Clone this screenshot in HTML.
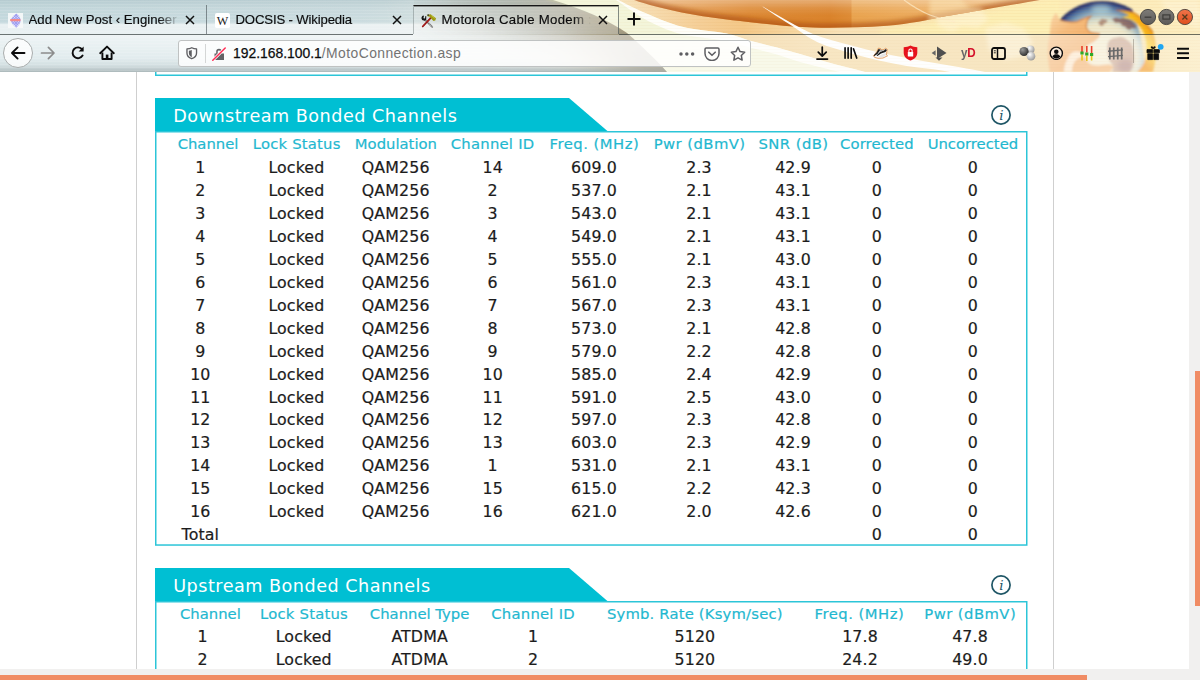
<!DOCTYPE html>
<html lang="en">
<head>
<meta charset="utf-8">
<title>Motorola Cable Modem : Status -> Connection</title>
<style>
html,body{margin:0;padding:0;}
body{width:1200px;height:680px;overflow:hidden;position:relative;background:#fff;font-family:"DejaVu Sans","Liberation Sans",sans-serif;}
#chrome{position:absolute;left:0;top:0;width:1200px;height:72px;overflow:hidden;background:#f3dcb4;}
#page{position:absolute;left:0;top:72px;width:1189px;height:597px;overflow:hidden;background:#fff;}
.vline{position:absolute;top:0;width:1px;height:597px;background:#cfcfcf;}
.topbox{position:absolute;left:155px;top:-10px;width:870.5px;height:13px;border:1.5px solid #2cc5d8;box-sizing:content-box;}
.banner{position:absolute;left:155px;width:460px;height:34px;}
.banner svg{position:absolute;left:0;top:0;}
.banner .title{position:absolute;left:18.2px;top:1px;line-height:34px;font-size:17.6px;letter-spacing:0.5px;color:#fff;white-space:nowrap;}
.info{position:absolute;left:990px;}
.box{position:absolute;left:155px;width:870.5px;border:1.5px solid #2cc5d8;border-bottom-width:1.5px;box-sizing:content-box;}
.row{position:absolute;left:0;width:1189px;height:22px;}
.row span{position:absolute;top:0;transform:translateX(-50%);white-space:nowrap;line-height:22px;}
.row.hd span{color:#1fb8d0;font-size:14.8px;-webkit-text-stroke:0.2px #1fb8d0;}
.row.dt span{color:#1c1c1c;font-size:15.8px;letter-spacing:0.12px;-webkit-text-stroke:0.2px #1c1c1c;}
#vscroll{position:absolute;left:1189px;top:72px;width:11px;height:608px;background:#f1f0ef;}
#vscroll i{position:absolute;left:6px;top:299px;width:5px;height:235px;background:#f08c64;}
#hscroll{position:absolute;left:0;top:669px;width:1200px;height:11px;background:#f1f0ef;}
#hscroll i{position:absolute;left:0;top:6px;width:1087px;height:5px;background:#f08c64;}

#navbar{position:absolute;left:0;top:34.5px;width:1200px;height:37.5px;background:rgba(255,255,255,.4);}
.nline{position:absolute;top:33.5px;height:1px;background:rgba(50,60,60,.7);}
#tabline{display:none}
.tab{position:absolute;top:5px;height:29px;font-family:"Liberation Sans",sans-serif;}
.tab.active{background:rgba(255,255,255,.22);border-top:1px solid #161616;box-shadow:inset 0 1px 0 rgba(22,22,22,.4);top:5px;border-left:1px solid rgba(90,100,100,.4);border-right:1px solid rgba(70,80,80,.65);box-sizing:content-box;width:204px !important;height:28px;}
.tab .fav{position:absolute;left:8px;top:8px;}
.tab.active .fav{top:7.5px;left:7px}
.tab .tl{-webkit-text-stroke:0.15px #0c0c0d;position:absolute;left:28.500px;top:7px;width:152px;overflow:hidden;white-space:nowrap;font-size:13.200px;line-height:16px;color:#0c0c0d;-webkit-mask-image:linear-gradient(to right,#000 85%,transparent 99%);mask-image:linear-gradient(to right,#000 85%,transparent 99%);}
.tab.active .tl{-webkit-mask-image:linear-gradient(to right,#000 88%,transparent 100%);mask-image:linear-gradient(to right,#000 88%,transparent 100%);letter-spacing:0.28px;}
.tab.active .tl{top:6px;left:27.500px}
.tab .tx{position:absolute;right:11px;top:10px;}
.tab.active .tx{top:9px;right:10px}
.tabsep{position:absolute;top:5px;width:1px;height:29px;background:rgba(70,80,85,.6);}
#newtab{position:absolute;left:627px;top:12px;}
#winctl{position:absolute;left:1138.500px;top:8px;}
#backbtn{position:absolute;left:3px;top:38px;width:30px;height:30px;border-radius:50%;background:rgba(255,255,255,.8);border:1px solid #a9adad;box-sizing:border-box;}
.ni{position:absolute;}
#urlbar{position:absolute;left:178px;top:40px;width:573px;height:26.500px;box-sizing:border-box;border:1px solid #bfc2c2;border-radius:3px;background:rgba(255,255,255,.82);font-family:"Liberation Sans",sans-serif;}
#urlbar svg{position:absolute;}
#urlbar .usep{position:absolute;left:26px;top:3px;width:1px;height:19px;background:#d4d6d6;}
#urlbar .url{position:absolute;left:54px;top:3px;font-size:13.900px;line-height:19px;color:#737373;white-space:nowrap;}
#urlbar .upath{letter-spacing:0.42px}
#urlbar .url b{font-weight:normal;color:#0c0c0d;-webkit-text-stroke:0.25px #0c0c0d;}
.ti{position:absolute;}
.ti{position:absolute;}
.yd{font-family:"Liberation Sans",sans-serif;font-weight:bold;font-size:12.5px;line-height:16px;color:#d4122c;letter-spacing:-0.3px;transform:scaleX(.93);transform-origin:0 0;}
.yd i{font-style:normal;color:#666;}
.tsep{position:absolute;top:39px;width:1px;height:24px;background:rgba(90,80,70,.35);}
.boxs{position:absolute;left:154px;}
</style>
</head>
<body>
<div id="page">
<div class="vline" style="left:136px"></div>
<div class="vline" style="left:1053px"></div>
<svg class="boxs" style="top:0" width="876" height="6"><path d="M1.75,-1 V3.25 H872.75 V-1" fill="none" stroke="#2cc5d8" stroke-width="1.5"/></svg>
<div class="banner" style="top:26px"><svg width="460" height="34" viewBox="0 0 460 34"><polygon points="0,0 414,0 453,33.5 0,33.5" fill="#00bfd3"/></svg><span class="title">Downstream Bonded Channels</span></div>
<svg class="info" style="top:32.0px" width="22" height="22" viewBox="0 0 22 22"><circle cx="11" cy="11" r="9.1" fill="none" stroke="#1f5666" stroke-width="1.7"/><text x="11.3" y="16" text-anchor="middle" font-family="DejaVu Serif, Liberation Serif, serif" font-style="italic" font-size="13.5" fill="#1f5666">i</text></svg>
<svg class="boxs" style="top:58px" width="876" height="417.28"><rect x="1.75" y="1.75" width="871" height="413.28" fill="none" stroke="#2cc5d8" stroke-width="1.5"/></svg>
<div class="row hd" style="top:61.20px"><span style="left:208.0px">Channel</span><span style="left:296.7px;letter-spacing:0.2px">Lock Status</span><span style="left:395.9px">Modulation</span><span style="left:492.6px;letter-spacing:0.25px">Channel ID</span><span style="left:594.4px;letter-spacing:0.5px">Freq. (MHz)</span><span style="left:699.6px;letter-spacing:0.44px">Pwr (dBmV)</span><span style="left:793.5px;letter-spacing:0.43px">SNR (dB)</span><span style="left:876.9px;letter-spacing:0.15px">Corrected</span><span style="left:972.9px">Uncorrected</span></div>
<div class="row dt" style="top:85.10px"><span style="left:200.3px">1</span><span style="left:296.4px">Locked</span><span style="left:395.7px">QAM256</span><span style="left:492.7px">14</span><span style="left:594.0px">609.0</span><span style="left:699.0px">2.3</span><span style="left:793.0px">42.9</span><span style="left:876.9px">0</span><span style="left:972.8px">0</span></div>
<div class="row dt" style="top:108.04px"><span style="left:200.3px">2</span><span style="left:296.4px">Locked</span><span style="left:395.7px">QAM256</span><span style="left:492.7px">2</span><span style="left:594.0px">537.0</span><span style="left:699.0px">2.1</span><span style="left:793.0px">43.1</span><span style="left:876.9px">0</span><span style="left:972.8px">0</span></div>
<div class="row dt" style="top:130.98px"><span style="left:200.3px">3</span><span style="left:296.4px">Locked</span><span style="left:395.7px">QAM256</span><span style="left:492.7px">3</span><span style="left:594.0px">543.0</span><span style="left:699.0px">2.1</span><span style="left:793.0px">43.1</span><span style="left:876.9px">0</span><span style="left:972.8px">0</span></div>
<div class="row dt" style="top:153.92px"><span style="left:200.3px">4</span><span style="left:296.4px">Locked</span><span style="left:395.7px">QAM256</span><span style="left:492.7px">4</span><span style="left:594.0px">549.0</span><span style="left:699.0px">2.1</span><span style="left:793.0px">43.1</span><span style="left:876.9px">0</span><span style="left:972.8px">0</span></div>
<div class="row dt" style="top:176.86px"><span style="left:200.3px">5</span><span style="left:296.4px">Locked</span><span style="left:395.7px">QAM256</span><span style="left:492.7px">5</span><span style="left:594.0px">555.0</span><span style="left:699.0px">2.1</span><span style="left:793.0px">43.0</span><span style="left:876.9px">0</span><span style="left:972.8px">0</span></div>
<div class="row dt" style="top:199.80px"><span style="left:200.3px">6</span><span style="left:296.4px">Locked</span><span style="left:395.7px">QAM256</span><span style="left:492.7px">6</span><span style="left:594.0px">561.0</span><span style="left:699.0px">2.3</span><span style="left:793.0px">43.1</span><span style="left:876.9px">0</span><span style="left:972.8px">0</span></div>
<div class="row dt" style="top:222.74px"><span style="left:200.3px">7</span><span style="left:296.4px">Locked</span><span style="left:395.7px">QAM256</span><span style="left:492.7px">7</span><span style="left:594.0px">567.0</span><span style="left:699.0px">2.3</span><span style="left:793.0px">43.1</span><span style="left:876.9px">0</span><span style="left:972.8px">0</span></div>
<div class="row dt" style="top:245.68px"><span style="left:200.3px">8</span><span style="left:296.4px">Locked</span><span style="left:395.7px">QAM256</span><span style="left:492.7px">8</span><span style="left:594.0px">573.0</span><span style="left:699.0px">2.1</span><span style="left:793.0px">42.8</span><span style="left:876.9px">0</span><span style="left:972.8px">0</span></div>
<div class="row dt" style="top:268.62px"><span style="left:200.3px">9</span><span style="left:296.4px">Locked</span><span style="left:395.7px">QAM256</span><span style="left:492.7px">9</span><span style="left:594.0px">579.0</span><span style="left:699.0px">2.2</span><span style="left:793.0px">42.8</span><span style="left:876.9px">0</span><span style="left:972.8px">0</span></div>
<div class="row dt" style="top:291.56px"><span style="left:200.3px">10</span><span style="left:296.4px">Locked</span><span style="left:395.7px">QAM256</span><span style="left:492.7px">10</span><span style="left:594.0px">585.0</span><span style="left:699.0px">2.4</span><span style="left:793.0px">42.9</span><span style="left:876.9px">0</span><span style="left:972.8px">0</span></div>
<div class="row dt" style="top:314.50px"><span style="left:200.3px">11</span><span style="left:296.4px">Locked</span><span style="left:395.7px">QAM256</span><span style="left:492.7px">11</span><span style="left:594.0px">591.0</span><span style="left:699.0px">2.5</span><span style="left:793.0px">43.0</span><span style="left:876.9px">0</span><span style="left:972.8px">0</span></div>
<div class="row dt" style="top:337.44px"><span style="left:200.3px">12</span><span style="left:296.4px">Locked</span><span style="left:395.7px">QAM256</span><span style="left:492.7px">12</span><span style="left:594.0px">597.0</span><span style="left:699.0px">2.3</span><span style="left:793.0px">42.8</span><span style="left:876.9px">0</span><span style="left:972.8px">0</span></div>
<div class="row dt" style="top:360.38px"><span style="left:200.3px">13</span><span style="left:296.4px">Locked</span><span style="left:395.7px">QAM256</span><span style="left:492.7px">13</span><span style="left:594.0px">603.0</span><span style="left:699.0px">2.3</span><span style="left:793.0px">42.9</span><span style="left:876.9px">0</span><span style="left:972.8px">0</span></div>
<div class="row dt" style="top:383.32px"><span style="left:200.3px">14</span><span style="left:296.4px">Locked</span><span style="left:395.7px">QAM256</span><span style="left:492.7px">1</span><span style="left:594.0px">531.0</span><span style="left:699.0px">2.1</span><span style="left:793.0px">43.1</span><span style="left:876.9px">0</span><span style="left:972.8px">0</span></div>
<div class="row dt" style="top:406.26px"><span style="left:200.3px">15</span><span style="left:296.4px">Locked</span><span style="left:395.7px">QAM256</span><span style="left:492.7px">15</span><span style="left:594.0px">615.0</span><span style="left:699.0px">2.2</span><span style="left:793.0px">42.3</span><span style="left:876.9px">0</span><span style="left:972.8px">0</span></div>
<div class="row dt" style="top:429.20px"><span style="left:200.3px">16</span><span style="left:296.4px">Locked</span><span style="left:395.7px">QAM256</span><span style="left:492.7px">16</span><span style="left:594.0px">621.0</span><span style="left:699.0px">2.0</span><span style="left:793.0px">42.6</span><span style="left:876.9px">0</span><span style="left:972.8px">0</span></div>
<div class="row dt" style="top:452.14px"><span style="left:200.3px">Total</span><span style="left:876.9px">0</span><span style="left:972.8px">0</span></div>
<div class="banner" style="top:496px"><svg width="460" height="34" viewBox="0 0 460 34"><polygon points="0,0 414,0 453,33.5 0,33.5" fill="#00bfd3"/></svg><span class="title">Upstream Bonded Channels</span></div>
<svg class="info" style="top:502.0px" width="22" height="22" viewBox="0 0 22 22"><circle cx="11" cy="11" r="9.1" fill="none" stroke="#1f5666" stroke-width="1.7"/><text x="11.3" y="16" text-anchor="middle" font-family="DejaVu Serif, Liberation Serif, serif" font-style="italic" font-size="13.5" fill="#1f5666">i</text></svg>
<svg class="boxs" style="top:528px" width="876" height="73.18"><rect x="1.75" y="1.75" width="871" height="69.18" fill="none" stroke="#2cc5d8" stroke-width="1.5"/></svg>
<div class="row hd" style="top:531.20px"><span style="left:210.4px">Channel</span><span style="left:304.0px;letter-spacing:0.2px">Lock Status</span><span style="left:419.6px;letter-spacing:0.0px">Channel Type</span><span style="left:533.1px;letter-spacing:0.25px">Channel ID</span><span style="left:694.8px;letter-spacing:0.18px">Symb. Rate (Ksym/sec)</span><span style="left:859.4px;letter-spacing:0.5px">Freq. (MHz)</span><span style="left:970.2px;letter-spacing:0.44px">Pwr (dBmV)</span></div>
<div class="row dt" style="top:554.40px"><span style="left:202.5px">1</span><span style="left:303.7px">Locked</span><span style="left:419.6px">ATDMA</span><span style="left:533.0px">1</span><span style="left:694.9px">5120</span><span style="left:860.0px">17.8</span><span style="left:970.0px">47.8</span></div>
<div class="row dt" style="top:577.34px"><span style="left:202.5px">2</span><span style="left:303.7px">Locked</span><span style="left:419.6px">ATDMA</span><span style="left:533.0px">2</span><span style="left:694.9px">5120</span><span style="left:860.0px">24.2</span><span style="left:970.0px">49.0</span></div>

</div>
<div id="hscroll"><i></i></div>
<div id="vscroll"><i></i></div>
<div id="chrome">
<svg id="themebg" width="1200" height="72" viewBox="0 0 1200 72" style="position:absolute;left:0;top:0">
<defs>
<linearGradient id="gBase" x1="0" y1="0" x2="1200" y2="0" gradientUnits="userSpaceOnUse">
<stop offset="0" stop-color="#c8dce0"/><stop offset="0.3" stop-color="#cfdfe2"/><stop offset="0.43" stop-color="#dde6e2"/><stop offset="0.47" stop-color="#eeece0"/><stop offset="0.5" stop-color="#f8e8c8"/><stop offset="0.54" stop-color="#f6dcb0"/><stop offset="0.583" stop-color="#f5cf98"/><stop offset="0.62" stop-color="#f4c888"/><stop offset="0.66" stop-color="#f6d6a0"/><stop offset="0.7" stop-color="#f8e2b8"/><stop offset="0.78" stop-color="#fae6b2"/><stop offset="0.85" stop-color="#fcebb4"/><stop offset="1" stop-color="#fcedc0"/>
</linearGradient>
<linearGradient id="gTopShade" x1="0" y1="0" x2="0" y2="34" gradientUnits="userSpaceOnUse">
<stop offset="0" stop-color="#8fa9b0" stop-opacity="0.32"/><stop offset="0.25" stop-color="#8fa9b0" stop-opacity="0.1"/><stop offset="1" stop-color="#8fa9b0" stop-opacity="0"/>
</linearGradient>
<linearGradient id="gFadeR" x1="0" y1="0" x2="640" y2="0" gradientUnits="userSpaceOnUse">
<stop offset="0" stop-color="#fff" stop-opacity="1"/><stop offset="0.75" stop-color="#fff" stop-opacity="1"/><stop offset="1" stop-color="#fff" stop-opacity="0"/>
</linearGradient>
<linearGradient id="gFadeR2" x1="0" y1="0" x2="640" y2="0" gradientUnits="userSpaceOnUse"><stop offset="0" stop-color="#fff" stop-opacity="1"/><stop offset="0.6" stop-color="#fff" stop-opacity="1"/><stop offset="0.82" stop-color="#fff" stop-opacity="0"/></linearGradient>
<mask id="mLeft2"><rect width="640" height="72" fill="url(#gFadeR2)"/></mask>
<linearGradient id="gSwV" x1="0" y1="0" x2="0" y2="56" gradientUnits="userSpaceOnUse"><stop offset="0" stop-color="#fff" stop-opacity="0.5"/><stop offset="1" stop-color="#fff" stop-opacity="1"/></linearGradient>
<mask id="mSwV"><rect width="1200" height="72" fill="url(#gSwV)"/></mask>
<mask id="mLeft"><rect width="640" height="72" fill="url(#gFadeR)"/></mask>
<linearGradient id="gLobe" x1="636" y1="0" x2="1040" y2="0" gradientUnits="userSpaceOnUse">
<stop offset="0" stop-color="#efbb80"/><stop offset="0.1" stop-color="#e6a057"/><stop offset="0.28" stop-color="#dd8a36"/><stop offset="0.48" stop-color="#da832c"/><stop offset="0.532" stop-color="#de8c36"/><stop offset="0.535" stop-color="#e9a450"/><stop offset="0.8" stop-color="#eeb066"/><stop offset="1" stop-color="#f3c584"/>
</linearGradient>
<linearGradient id="gLobeV" x1="0" y1="0" x2="0" y2="28" gradientUnits="userSpaceOnUse">
<stop offset="0" stop-color="#fff" stop-opacity="0.34"/><stop offset="0.3" stop-color="#fff" stop-opacity="0.1"/><stop offset="0.55" stop-color="#fff" stop-opacity="0"/>
</linearGradient>
<clipPath id="cLobe"><path d="M634,0 C660,9 700,17 740,21 C770,24.500 795,27 813,27.500 C835,28 860,27.500 887,25.700 C910,24 930,19.500 940,17.300 C960,14 1000,7 1040,0 Z"/></clipPath>
<clipPath id="cSw"><path d="M0,0 L553,0 C583,9 608,20 627,33 C645,49 657,61 667,72 L0,72 Z"/></clipPath>
<radialGradient id="gGlobe" cx="1102" cy="58" r="57" gradientUnits="userSpaceOnUse">
<stop offset="0" stop-color="#f6edd0"/><stop offset="0.58" stop-color="#efe8cc"/><stop offset="0.68" stop-color="#d6dccc"/><stop offset="0.77" stop-color="#9fb9c4"/><stop offset="0.86" stop-color="#6a8cae"/><stop offset="0.925" stop-color="#456094"/><stop offset="0.97" stop-color="#2a3470"/><stop offset="1" stop-color="#1e2050"/>
</radialGradient>
<linearGradient id="gFlame" x1="1126" y1="42" x2="1156" y2="18" gradientUnits="userSpaceOnUse">
<stop offset="0" stop-color="#f29418"/><stop offset="0.38" stop-color="#fbd226"/><stop offset="0.7" stop-color="#f5a21a"/><stop offset="1" stop-color="#dc6a0e"/>
</linearGradient>
<linearGradient id="gFox" x1="1048" y1="14" x2="1100" y2="72" gradientUnits="userSpaceOnUse">
<stop offset="0" stop-color="#fad8aa"/><stop offset="0.3" stop-color="#f5bc7e"/><stop offset="0.6" stop-color="#f3b06c"/><stop offset="1" stop-color="#f4b674"/>
</linearGradient>
<pattern id="scan" width="4" height="3" patternUnits="userSpaceOnUse"><rect width="4" height="1" y="1" fill="#d98a30" opacity="0.05"/></pattern>
<filter id="blur05" x="-5%" y="-10%" width="110%" height="120%"><feGaussianBlur stdDeviation="0.45"/></filter>
<filter id="blur1" x="-10%" y="-20%" width="120%" height="140%"><feGaussianBlur stdDeviation="0.8"/></filter>
<filter id="blur2" x="-10%" y="-30%" width="120%" height="160%"><feGaussianBlur stdDeviation="2"/></filter>
<filter id="blurSw" filterUnits="userSpaceOnUse" x="250" y="-150" width="600" height="400"><feGaussianBlur stdDeviation="26"/></filter>
<filter id="blur16" x="-50%" y="-100%" width="200%" height="300%"><feGaussianBlur stdDeviation="14"/></filter>
</defs>
<rect width="1200" height="72" fill="url(#gBase)"/>
<rect width="640" height="34" fill="url(#gTopShade)" mask="url(#mLeft2)"/>
<rect x="0" y="23.500" width="640" height="11" fill="#fff" opacity="0.6" mask="url(#mLeft)"/>
<linearGradient id="gNavR" x1="640" y1="0" x2="1200" y2="0" gradientUnits="userSpaceOnUse"><stop offset="0" stop-color="#f0cc8a" stop-opacity="0"/><stop offset="0.15" stop-color="#f0cc8a" stop-opacity="0.95"/><stop offset="0.3" stop-color="#f2d499" stop-opacity="0.9"/><stop offset="0.75" stop-color="#f1d496" stop-opacity="0.9"/><stop offset="1" stop-color="#f8e2a8" stop-opacity="0.6"/></linearGradient>
<rect x="640" y="34" width="560" height="38" fill="url(#gNavR)"/>
<linearGradient id="gBotL" x1="0" y1="58" x2="0" y2="72" gradientUnits="userSpaceOnUse"><stop offset="0" stop-color="#8fa4a8" stop-opacity="0"/><stop offset="0.5" stop-color="#8fa4a8" stop-opacity="0.3"/><stop offset="1" stop-color="#6f8488" stop-opacity="0.95"/></linearGradient>
<g clip-path="url(#cSw)"><rect x="0" y="58" width="680" height="14" fill="url(#gBotL)"/></g>
<linearGradient id="gNavTopL" x1="0" y1="34" x2="0" y2="64" gradientUnits="userSpaceOnUse"><stop offset="0" stop-color="#fff" stop-opacity="0.5"/><stop offset="1" stop-color="#fff" stop-opacity="0"/></linearGradient>
<rect x="0" y="34" width="640" height="30" fill="url(#gNavTopL)" mask="url(#mLeft)"/>
<!-- pale region between gray edge and white band -->
<path d="M545,0 C583,9 608,20 627,33 C645,49 657,61 667,72 L865,72 C859,70.400 853,68.900 846.700,67.300 C840,65.600 833.500,63.800 826.700,62 C818,59.500 809,56.800 800,54 C792,51.800 784.500,49.600 777,47.500 C768,45.200 759,43 750,40.700 C744,38.500 737,36.500 731,34.400 C725,33 719,32.300 713,31.500 C701,30 689,28.500 678,25.700 C668,22.500 659,19 650,15 C644,12.500 638,10 632,7 C628,5 623,2.500 618,0 Z" fill="#f3f5da" filter="url(#blur05)"/>
<path d="M618,0 C623,2.500 628,5 632,7 C638,10 644,12.500 650,15 C659,19 668,22.500 678,25.700 C689,28.500 701,30 713,31.500 C719,32.300 725,33 731,34.400 C737,36.500 744,38.500 750,40.700 C759,43 768,45.200 777,47.500 C784.500,49.600 792,51.800 800,54 C809,56.800 818,59.500 826.700,62 C833.500,63.800 840,65.600 846.700,67.300 C853,68.900 859,70.400 865,72 L840,72 C835.500,70.900 831,69.800 826.700,68.700 C818,66.600 809,64.400 800,62 C792,59.600 784.500,57 777,54.500 C768,52 759,50 750,47.500 C742,45 735,43 728,41 C715,39 700,37.500 685,35 C672,32 660,27 648,21 C640,16.500 630,10 622,4 L616,0 Z" fill="#fffffb" opacity="0.97" filter="url(#blur05)"/>
<!-- gray swoosh -->
<g clip-path="url(#cSw)" mask="url(#mSwV)"><path d="M440,-30 C500,-18 530,-8 553,0 C583,9 608,20 627,33 C645,49 657,61 667,72 C680,86 690,98 700,110" stroke="#6c6c5a" stroke-width="60" fill="none" filter="url(#blurSw)"/></g>
<!-- pale yellow region under lobe right -->
<path d="M880,30 C930,24 990,14 1060,-2 L1060,34 L880,34 Z" fill="#fdf0b6" opacity="0.85" filter="url(#blur2)"/>
<!-- light map shapes on the right -->
<path d="M930,0 l30,0 8,8 14,2 6,10 -10,8 -16,-2 -10,6 -14,-6 -2,-12 Z M985,28 l20,-6 18,6 10,14 -8,14 -20,4 -16,-10 Z M1160,0 h40 v30 l-14,-6 -16,-10 Z" fill="#fff6da" opacity="0.55" filter="url(#blur2)"/>
<!-- orange lobe -->
<g clip-path="url(#cLobe)">
<rect x="630" y="0" width="420" height="30" fill="url(#gLobe)"/>
<rect x="630" y="0" width="420" height="30" fill="url(#gLobeV)"/>
<path d="M634,0 C660,9 700,17 740,21 C770,24.500 795,27 813,27.500 C835,28 860,27.500 887,25.700 C910,24 930,19.500 940,17.300 C960,14 1000,7 1040,0" stroke="#a8480a" stroke-width="9" fill="none" opacity="0.6" filter="url(#blur2)"/>
<path d="M930,-2 l30,0 8,8 14,2 6,10 -10,8 -50,0 Z" fill="#fbe6b8" opacity="0.55" filter="url(#blur2)"/>
</g>
<!-- white swooshes -->
<path d="M757.500,3.200 C770,11 782,18 795,25 C801,28.300 807,31.300 813,34 C817.500,35.800 822,37.300 826.700,38.700 C835.500,41.300 844.500,43.700 853.300,46 C862,48.300 871,50.600 880,52.700 C889,54.600 898,56.300 906.700,58 C915.500,59.600 924.500,61.200 933.300,62.700 C942,64.200 951,65.800 960,67.300 C968,68.800 977,70.400 985,72 L950,72 C944.500,71.100 939,70.200 933.300,69.300 C924.500,68.200 915.500,67.200 906.700,66 C898,64.500 889,62.700 880,60.700 C871,58.700 862,56.500 853.300,54 C844.500,51.500 835.500,48.800 826.700,46 C820,43.500 814,40.500 808,37 C803,33.700 798,30 793,26.500 C781,19 769,11 757.500,3.200 Z" fill="#fff" opacity="0.98" filter="url(#blur05)"/>
<path d="M904,0 C912,6 920,11 930,15 C938,18 946,20 955,22" stroke="#fdeccb" stroke-width="1.300" fill="none" opacity="0.7"/>
<!-- firefox globe -->
<g filter="url(#blur1)">
<clipPath id="cGl"><path d="M1057,24 L1057,0 L1128,0 L1134,14 L1140,34 L1146,72 L1052,72 Z"/></clipPath><circle cx="1102" cy="58" r="57" fill="url(#gGlobe)" clip-path="url(#cGl)"/>
<ellipse cx="1101" cy="9" rx="10" ry="4.500" fill="#b9dde0" opacity="0.6" filter="url(#blur2)"/>
<path d="M1098,22.500 l2.500,-2 1.500,-2 2,1 2.500,0 1,2 -1.500,1.500 -2,0.500 -0.500,2 -3,0.500 -1,-1.500 Z" fill="#9a6e5c" opacity="0.7"/>
<path d="M1112,19 l4,-1.500 4,1 3,-0.500 4,1 4,1.500 3,3 2.500,3.500 -2,1.500 -3,-0.500 -1.500,2 -3,-1 -2,-2.500 -3,-0.500 -1,-2.500 -3,-1 -2.500,0.500 Z" fill="#7c4c4a" opacity="0.72"/>
<path d="M1107.500,45 C1108,40 1112,37.500 1117,37.400 C1120,36 1124,37 1127,40 C1131,42 1133.500,46 1133.500,52 C1135,58 1134,66 1130,72 L1112,72 C1114,68 1113,64 1110,62 C1108,57 1107,50 1107.500,45 Z" fill="#b07a66" opacity="0.6"/>
<ellipse cx="1125" cy="66" rx="8" ry="7" fill="#7e4c66" opacity="0.3" filter="url(#blur2)"/>
<!-- fox -->
<path d="M1056,12.500 L1060,20 C1066,22 1072,22.500 1077,21.700 C1082,19 1087,17 1091,16.300 C1088,19 1086.500,22 1087,23 C1085.500,26 1086,29 1090,32 C1093,33.500 1097,33 1100,33.600 C1100,36 1099,37.500 1097.800,38.500 C1096,40.500 1094,41.800 1092.300,42.800 C1090,44 1088,45 1087,46 C1084,50 1084,57 1088,62.300 C1090,64.500 1093,65.500 1096.700,65.600 C1101,65.500 1105,64 1109.700,64.500 C1112,65 1113.500,66.500 1113,67.800 C1112,70 1111,71 1109.700,72 L1050,72 C1047,58 1047,44 1050,32.500 C1050.300,28 1050.500,25 1051,21.700 C1052,18 1054,15 1056,12.500 Z" fill="url(#gFox)"/>
<path d="M1060,20 C1066,22 1072,22.500 1077,21.700 C1082,19 1087,17 1091,16.300 C1088,19 1086.500,22 1087,23 C1085.500,26 1086,29 1090,32 C1093,33.500 1097,33 1100,33.600" stroke="#c8681c" stroke-width="1.200" fill="none" opacity="0.7"/>
<path d="M1068.500,57 C1070,53 1074,51 1078,51.500 C1082,52 1085,54 1086,57 C1083,56.500 1079,57 1076,60 C1073,63 1072,67 1072,72 L1064,72 C1064,66 1066,61 1068.500,57 Z" fill="#fdf0da" opacity="0.85"/>
<!-- flame -->
<path d="M1116,10.300 C1122,10.500 1128,11 1133.500,12.500 C1138,15 1141.500,18 1144.300,21.700 C1148,26 1151,29 1153,32.500 C1155,38 1156.500,46 1156,53 C1155.500,60 1154.500,66 1153,72 L1137,72 C1143,66 1146,60 1146.500,53 C1147,47 1146.500,42 1145,36.500 C1143.500,32 1141.500,28.500 1139,26 C1136,23 1133.500,21 1131,19.800 C1128,18.500 1124.500,17.600 1121,17.300 C1124.500,16.600 1127.500,16 1129.500,15.300 C1125,13 1120.500,11.300 1116,10.300 Z" fill="url(#gFlame)"/>
<path d="M1116,10.300 C1122,10.500 1128,11 1133.500,12.500 C1138,15 1141.500,18 1144.300,21.700 C1148,26 1151,29 1153,32.500" stroke="#b8500a" stroke-width="1.200" fill="none" opacity="0.7"/>
</g>
<linearGradient id="gScanM" x1="480" y1="0" x2="700" y2="0" gradientUnits="userSpaceOnUse"><stop offset="0" stop-color="#fff" stop-opacity="0"/><stop offset="1" stop-color="#fff" stop-opacity="1"/></linearGradient>
<mask id="mScan"><rect width="1200" height="72" fill="url(#gScanM)"/></mask>
<rect width="1200" height="72" fill="url(#scan)" mask="url(#mScan)"/>
<pattern id="scanL" width="4" height="3" patternUnits="userSpaceOnUse"><rect width="4" height="1" y="1" fill="#fff" opacity="0.12"/></pattern>
<rect width="640" height="72" fill="url(#scanL)" mask="url(#mLeft)"/>
</svg>
<div id="navbar"></div>
<div class="nline" style="left:0;width:413px"></div><div class="nline" style="left:619px;width:581px"></div>
<!-- tabs -->
<div class="tab" style="left:0;width:206px">
  <svg class="fav" viewBox="0 0 16 16" width="15" height="15"><defs><pattern id="fvh" width="2" height="2" patternUnits="userSpaceOnUse" patternTransform="rotate(45)"><rect width="2" height="2" fill="#9c9cf0"/><rect width="1" height="1" fill="#ececfd"/></pattern></defs><rect width="16" height="16" fill="#f6f9f9" fill-opacity=".92"/><path d="M9 0.600C12 3.200 13.400 5.600 13.400 8S12 12.800 8.800 15.600C5.200 13 3.200 10.600 3.200 8S5.400 3.200 9 0.600z" fill="url(#fvh)"/><rect x="2.200" y="6.300" width="11.200" height="2.500" rx="1" fill="#f48a8a"/></svg>
  <span class="tl">Add New Post ‹ Engineer</span>
  <svg class="tx" viewBox="0 0 10 10" width="10" height="10"><path d="M1 1l8 8M9 1l-8 8" stroke="#111" stroke-width="1.5" fill="none"/></svg>
</div>
<div class="tabsep" style="left:206px"></div>
<div class="tab" style="left:207px;width:206px">
  <svg class="fav" viewBox="0 0 16 16" width="15" height="15"><rect width="16" height="16" rx="2" fill="#fff"/><text x="8" y="12.6" text-anchor="middle" font-family="Liberation Serif, serif" font-size="13" fill="#222">W</text></svg>
  <span class="tl" style="letter-spacing:-0.17px">DOCSIS - Wikipedia</span>
  <svg class="tx" viewBox="0 0 10 10" width="10" height="10"><path d="M1 1l8 8M9 1l-8 8" stroke="#111" stroke-width="1.5" fill="none"/></svg>
</div>
<div class="tab active" style="left:413px;width:206px">
  <svg class="fav" viewBox="0 0 16 14" width="16" height="14"><path d="M4.300 6.200L11.200 12.900" stroke="#6e6e6e" stroke-width="1.700" stroke-linecap="round"/><path d="M4.300 6.200L11.200 12.900" stroke="#e4e4e4" stroke-width="1.700" stroke-dasharray="0.7 1.100" opacity=".7"/><path d="M0.500 4.600C0.300 2.900 1.200 1.800 2.700 1.500L2.900 3C2.400 3.300 2.300 3.800 2.500 4.300L4 4.500 4.400 2.100 5.300 2.200 5.200 5.900 3.700 6.800 1.100 6.100z" fill="#151515"/><path d="M1.700 12.500L9.800 3.800" stroke="#b41a1a" stroke-width="1.700" stroke-linecap="round"/><path d="M1.700 12.500L9.800 3.800" stroke="#3a1010" stroke-width="1.700" stroke-dasharray="0.6 1.200" opacity=".55"/><path d="M6.300 0.900L9.600 0.200 15 4.300 14.300 6.400 12.500 6.900 10 4.500 8.800 2.700 6.500 2.200z" fill="#9c9a14"/><path d="M5.900 0.800L8.200 0.200 7.300 2.300z" fill="#2a2a20"/><path d="M10.200 1.500l3.600 2.800" stroke="#c8c63a" stroke-width=".8"/></svg>
  <span class="tl" style="width:149px">Motorola Cable Modem : Status</span>
  <svg class="tx" viewBox="0 0 10 10" width="10" height="10"><path d="M1 1l8 8M9 1l-8 8" stroke="#111" stroke-width="1.5" fill="none"/></svg>
</div>
<svg id="newtab" viewBox="0 0 14 14" width="14" height="14"><path d="M7 0.5v13M0.5 7h13" stroke="#111" stroke-width="2" fill="none"/></svg>
<!-- window controls -->
<svg id="winctl" width="58" height="18" viewBox="0 0 58 18">
<defs><linearGradient id="wg" x1="0" y1="0" x2="0" y2="1"><stop offset="0" stop-color="#7d7b77"/><stop offset="1" stop-color="#5d5b58"/></linearGradient><linearGradient id="wr" x1="0" y1="0" x2="0" y2="1"><stop offset="0" stop-color="#f0744a"/><stop offset="1" stop-color="#df4f1e"/></linearGradient></defs>
<circle cx="9" cy="9" r="7.6" fill="url(#wg)" stroke="#4b4945" stroke-width="1"/><path d="M5.6 9.2h6.8" stroke="#3e3d3a" stroke-width="1.3"/>
<circle cx="27.4" cy="9" r="7.6" fill="url(#wg)" stroke="#4b4945" stroke-width="1"/><rect x="23.9" y="6.9" width="7" height="4.2" fill="none" stroke="#3e3d3a" stroke-width="1.2"/>
<circle cx="45.9" cy="9" r="7.6" fill="url(#wr)" stroke="#5a4a40" stroke-width="1"/><path d="M43.4 6.5l5 5M48.4 6.5l-5 5" stroke="#5a3a1c" stroke-width="1.3"/>
</svg>
<!-- nav buttons -->
<div id="backbtn"></div>
<svg class="ni" style="left:10px;top:45px" width="16" height="16" viewBox="0 0 16 16"><path d="M14.5 8H2.2M7.6 2.4L2 8l5.6 5.6" stroke="#0c0c0d" stroke-width="1.9" fill="none" stroke-linecap="round" stroke-linejoin="round"/></svg>
<svg class="ni" style="left:40px;top:45px" width="16" height="16" viewBox="0 0 16 16"><path d="M1.5 8h12.3M8.4 2.4L14 8l-5.6 5.6" stroke="#8c8c8c" stroke-width="1.7" fill="none" stroke-linecap="round" stroke-linejoin="round"/></svg>
<svg class="ni" style="left:70px;top:45px" width="16" height="16" viewBox="0 0 16 16"><path d="M12.6 10.6A5.4 5.4 0 1 1 12.2 4.4" stroke="#0c0c0d" stroke-width="1.9" fill="none" stroke-linecap="round"/><path d="M13.6 1.4v5h-5z" fill="#0c0c0d"/></svg>
<svg class="ni" style="left:99px;top:45px" width="16" height="16" viewBox="0 0 16 16"><path d="M1.2 8.2L8 1.6l6.8 6.6" stroke="#0c0c0d" stroke-width="1.9" fill="none" stroke-linecap="round" stroke-linejoin="round"/><path d="M3.4 7.4V14h9.2V7.4" stroke="#0c0c0d" stroke-width="1.9" fill="none" stroke-linejoin="round"/><rect x="6.8" y="9.6" width="2.6" height="4" fill="#0c0c0d"/></svg>
<!-- url bar -->
<div id="urlbar">
  <svg style="left:7.300px;top:6.300px" width="11.500" height="12.500" viewBox="0 0 12 13"><path d="M6 0.8c1.6 0.9 3.2 1.2 5 1.2v4.2c0 3-2 5-5 6-3-1-5-3-5-6V2c1.8 0 3.400-.3 5-1.200z" fill="none" stroke="#5e5e62" stroke-width="1.4" stroke-linejoin="round"/><path d="M6 3.200v7.400c-1.800-.8-3-2.200-3-4.400V3.900c1.100 0 2.100-.2 3-.7z" fill="#5e5e62"/></svg>
  <div class="usep"></div>
  <svg style="left:33px;top:6px" width="14" height="14" viewBox="0 0 14 14"><path d="M2.500 13h9.500V6.500H9.800V4.600a2.800 2.800 0 0 0-5.600 0v1.900H2.500z M5.700 6.500V4.700a1.300 1.300 0 0 1 2.600 0v1.800z" fill="#626266" fill-rule="evenodd"/><path d="M0.800 13.200L13.200 1" stroke="#fff" stroke-width="3"/><path d="M0.800 13.200L13.200 1" stroke="#ff2d55" stroke-width="1.500" stroke-linecap="round"/></svg>
  <span class="url"><b>192.168.100.1</b><span class="upath">/MotoConnection.asp</span></span>
  <svg style="left:499.500px;top:10.500px" width="16" height="4" viewBox="0 0 16 4"><circle cx="2" cy="2" r="1.750" fill="#5e5e62"/><circle cx="7.800" cy="2" r="1.750" fill="#5e5e62"/><circle cx="13.600" cy="2" r="1.750" fill="#5e5e62"/></svg>
  <svg style="left:525px;top:6px" width="16" height="14" viewBox="0 0 16 14"><path d="M2.200 1h11.600c.7 0 1.200.5 1.200 1.200v4.300a7 7 0 0 1-14 0V2.200C1 1.500 1.500 1 2.200 1z" fill="none" stroke="#5e5e62" stroke-width="1.500"/><path d="M4.800 5.200L8 8.300l3.200-3.100" fill="none" stroke="#5e5e62" stroke-width="1.600" stroke-linecap="round" stroke-linejoin="round"/></svg>
  <svg style="left:551px;top:5px" width="16" height="16" viewBox="0 0 16 16"><path d="M8 1.300l2.050 4.300 4.650.6-3.400 3.250.85 4.650L8 11.850 3.850 14.100l.85-4.650L1.300 6.200l4.650-.6z" fill="none" stroke="#5e5e62" stroke-width="1.500" stroke-linejoin="round"/></svg>
</div>
<!-- toolbar icons -->
<svg class="ti" style="left:814.500px;top:45.700px" width="14.500" height="15" viewBox="0 0 16 16"><path d="M8 1v9.500M3.600 6.400L8 10.800l4.400-4.400" stroke="#0c0c0d" stroke-width="1.900" fill="none" stroke-linecap="round" stroke-linejoin="round"/><path d="M2.200 14.200h11.600" stroke="#0c0c0d" stroke-width="1.900" stroke-linecap="round"/></svg>
<svg class="ti" style="left:843.300px;top:46.300px" width="15.500" height="14" viewBox="0 0 17 16"><path d="M2 2v12M5.500 2v12M9 2v12" stroke="#0c0c0d" stroke-width="1.900" stroke-linecap="round"/><path d="M11.600 3.200l3.700 10.600" stroke="#0c0c0d" stroke-width="1.900" stroke-linecap="round"/></svg>
<svg class="ti" style="left:872px;top:47px" width="17" height="12" viewBox="0 0 17 12"><path d="M1.500 8.800L5 4.500 6.300 1.200 8.500 1.500 9 3 12 2.500 13.500 1.300 15.300 2.300 14.800 4.500 14.500 8 15.500 8.800 11 11 6 11.300 2.500 10.300z" fill="#fcfcfc" stroke="#d97a2c" stroke-width=".7" stroke-linejoin="round"/><path d="M6.500 2L8.500 2.500 5.500 7 2 9.300 1.800 8.200 4.500 5.500z" fill="#1c1c1c"/><path d="M13.500 2L15 3 13.500 5 9 6.500 5.500 9 4.500 8.500 8 5 12 3.500z" fill="#1c1c1c"/><path d="M8.500 2.800l3.300 0.200 -3.500 1.800 -2.300 2.400z" fill="#9a9a9a"/><path d="M6 9.800l4-2.600 4-1.200 0.200 2 -3.400 2.200z" fill="#e4e4e4"/></svg>
<svg class="ti" style="left:902.500px;top:45px" width="15" height="16" viewBox="0 0 15 16"><path d="M7.500 0.500c2.200 1.200 4.300 1.700 6.800 1.700v5.300c0 4-2.700 6.700-6.800 8-4.100-1.300-6.800-4-6.800-8V2.200c2.500 0 4.600-.5 6.800-1.700z" fill="#e6121c"/><rect x="4.800" y="7" width="5.400" height="4.600" rx=".6" fill="#fff"/><path d="M5.900 7V5.600a1.600 1.600 0 0 1 3.200 0V7" stroke="#fff" stroke-width="1.100" fill="none"/></svg>
<svg class="ti" style="left:931px;top:45px" width="16" height="16" viewBox="0 0 16 16"><path d="M6 1.500l9.500 6.500-9.500 6z" fill="#4f4f4f"/><path d="M4.600 5.200v5.600L0.600 8z" fill="#666"/><path d="M4.500 12.500h7L8 15.800z" fill="#4f4f4f"/></svg>
<span class="ti yd" style="left:960.500px;top:45px"><i>y</i>D</span>
<svg class="ti" style="left:990.500px;top:46.500px" width="15" height="13" viewBox="0 0 15 13"><rect x="1" y="1" width="13" height="11" rx="2" fill="none" stroke="#0c0c0d" stroke-width="1.800"/><path d="M6.500 1v11" stroke="#0c0c0d" stroke-width="1.500"/><path d="M2.800 3.800h2M2.800 5.800h2" stroke="#0c0c0d" stroke-width="0.900"/></svg>
<svg class="ti" style="left:1019px;top:45px" width="17" height="16" viewBox="0 0 17 16"><defs><radialGradient id="sp1" cx=".35" cy=".3" r=".8"><stop offset="0" stop-color="#9a9a9a"/><stop offset="1" stop-color="#222"/></radialGradient><radialGradient id="sp2" cx=".35" cy=".3" r=".8"><stop offset="0" stop-color="#fff"/><stop offset="1" stop-color="#8e8e8e"/></radialGradient></defs><circle cx="11.500" cy="4.500" r="4" fill="url(#sp2)"/><circle cx="5" cy="6.500" r="4.600" fill="url(#sp1)"/><circle cx="12" cy="11.300" r="4.300" fill="url(#sp2)"/></svg>
<svg class="ti" style="left:1049.400px;top:45.700px" width="14.600" height="14.600" viewBox="0 0 16 16"><circle cx="8" cy="8" r="6.700" fill="#fff" fill-opacity=".6" stroke="#0c0c0d" stroke-width="1.500"/><circle cx="8" cy="6.300" r="2.500" fill="#0c0c0d"/><path d="M3.600 11.600c1-1.900 2.600-2.500 4.400-2.500s3.400.6 4.400 2.500c-1.100 1.400-2.600 2.200-4.400 2.200s-3.300-.8-4.400-2.200z" fill="#0c0c0d"/></svg>
<svg class="ti" style="left:1080px;top:45.500px" width="14" height="16" viewBox="0 0 14 16"><rect x="1.200" y="0" width="1.600" height="6" fill="#e8402a"/><rect x="6" y="0" width="1.600" height="6.500" fill="#e8402a"/><rect x="10.800" y="0" width="1.600" height="7" fill="#e8402a"/><rect x="1.200" y="8.500" width="1.600" height="6" fill="#e6c21a"/><rect x="6" y="9.500" width="1.600" height="5.500" fill="#e6c21a"/><rect x="10.800" y="10" width="1.600" height="4.500" fill="#e6c21a"/><rect x=".4" y="5.500" width="3.200" height="3" fill="#2eaa2a"/><rect x="5.200" y="6.500" width="3.200" height="3" fill="#2eaa2a"/><rect x="10" y="7" width="3.200" height="3" fill="#2eaa2a"/></svg>
<svg class="ti" style="left:1107.800px;top:46.800px" width="15.500" height="13" viewBox="0 0 17 14"><path d="M2 0.500v13M6.300 0.500v13M10.700 0.500v13M15 0.500v13" stroke="#6a6a6a" stroke-width="1.900"/><path d="M0 4.500l17-1.500M0 10.500l17-1.500" stroke="#6a6a6a" stroke-width="1.500"/></svg>
<div class="tsep" style="left:1133px"></div>
<svg class="ti" style="left:1146px;top:43px;overflow:visible" width="18" height="18" viewBox="0 -2 18 18"><path d="M1 4.600h5.600v3.200H1zM7.800 4.600h5.600v3.200H7.800zM1.800 8.800h4.800v5.800H1.800zM7.800 8.800h4.800v5.800H7.800z" fill="#0c0c0d" stroke="#0c0c0d" stroke-width=".8" stroke-linejoin="round"/><path d="M4.800 1.800c.9-1 1.800-.6 2.400.6.600-1.200 1.500-1.600 2.400-.6.500 1.200-.9 2-2.400 2.200-1.500-.2-2.900-1-2.400-2.200z" fill="#0c0c0d"/><circle cx="14.700" cy="1.800" r="2.900" fill="#1fa6f2"/></svg>
<svg class="ti" style="left:1176.500px;top:47px" width="12" height="13" viewBox="0 0 12 13"><path d="M0.500 1.700h11M0.500 6.300h11M0.500 10.900h11" stroke="#0c0c0d" stroke-width="2" stroke-linecap="round"/></svg>

</div>
</body>
</html>
